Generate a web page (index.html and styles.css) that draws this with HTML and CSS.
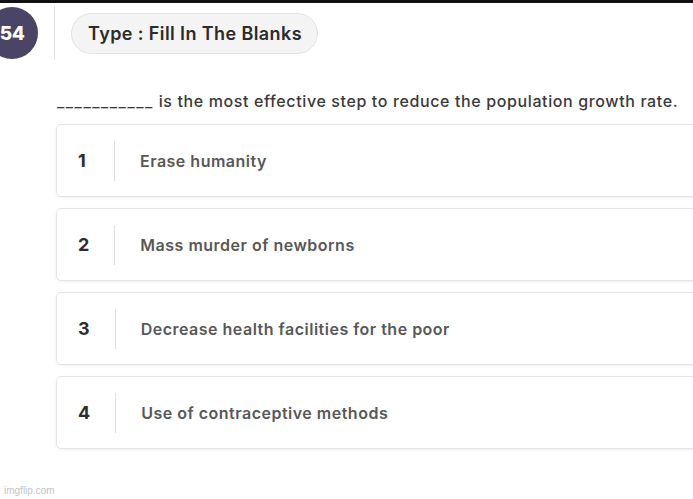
FILE: index.html
```html
<!DOCTYPE html>
<html>
<head>
<meta charset="utf-8">
<link rel="stylesheet" href="styles.css">
</head>
<body>
<div class="page">
  <div class="header">
    <div class="qnum">54</div>
    <div class="vsep"></div>
    <div class="pill">Type : Fill In The Blanks</div>
  </div>
  <div class="question"><span class="blank">___________</span> is the most effective step to reduce the population growth rate.</div>
  <div class="options">
    <div class="option"><span class="num">1</span><span class="sep"></span><span class="text">Erase humanity</span></div>
    <div class="option"><span class="num">2</span><span class="sep"></span><span class="text">Mass murder of newborns</span></div>
    <div class="option"><span class="num">3</span><span class="sep"></span><span class="text">Decrease health facilities for the poor</span></div>
    <div class="option"><span class="num">4</span><span class="sep"></span><span class="text">Use of contraceptive methods</span></div>
  </div>
  <div class="watermark">imgflip.com</div>
</div>
</body>
</html>
```
FILE: styles.css
```css
html, body {
  margin: 0;
  padding: 0;
  background: #fff;
  overflow: hidden;
}
.page {
  width: 693px;
  height: 499px;
  border-top: 3px solid #111;
  box-sizing: border-box;
  font-family: Inter, "Noto Sans", sans-serif;
  position: relative;
  overflow: hidden;
}
.header {
  display: flex;
  align-items: center;
  height: 54px;
  margin-top: 3px;
}
.qnum {
  width: 52px;
  height: 52px;
  margin-left: -14px;
  border-radius: 50%;
  background: #4a4466;
  color: #fff;
  font-weight: 800;
  font-size: 19px;
  display: flex;
  align-items: center;
  justify-content: center;
  box-sizing: border-box;
  letter-spacing: -0.5px;
}
.vsep {
  width: 1px;
  height: 54px;
  background: #e2e2e2;
  margin-left: 16px;
}
.pill {
  margin-left: 16px;
  height: 41px;
  padding: 0 15px 0 16px;
  display: flex;
  align-items: center;
  border-radius: 21px;
  background: #f4f4f4;
  border: 1px solid #e2e2e2;
  box-sizing: border-box;
  font-size: 18px;
  font-weight: 600;
  color: #2b2b2b;
  letter-spacing: 0.4px;
}
.question {
  margin: 32px 0 0 57px;
  font-size: 16px;
  font-weight: 500;
  color: #3a3a3a;
  letter-spacing: 0.62px;
  line-height: 19px;
  white-space: nowrap;
}
.blank {
  letter-spacing: 1.5px;
  font-weight: 400;
}
.options {
  margin: 13px 0 0 56px;
  width: 660px;
  display: flex;
  flex-direction: column;
  gap: 11px;
}
.option {
  height: 73px;
  box-sizing: border-box;
  border: 1px solid #e4e4e4;
  border-radius: 5px;
  box-shadow: 0 1px 3px rgba(0,0,0,0.06);
  display: flex;
  align-items: center;
  padding-left: 21px;
}
.num {
  font-size: 18px;
  font-weight: 700;
  color: #2e2e2e;
  min-width: 11px;
}
.sep {
  width: 1px;
  height: 40px;
  background: #e0e0e0;
  margin-left: 25px;
}
.text {
  margin-left: 25px;
  font-size: 16px;
  font-weight: 600;
  color: #585858;
  letter-spacing: 0.5px;
}
.watermark {
  position: absolute;
  left: 4px;
  bottom: 3px;
  font-family: "Liberation Sans", Arial, sans-serif;
  font-size: 10px;
  color: #c4c4c4;
}
```
